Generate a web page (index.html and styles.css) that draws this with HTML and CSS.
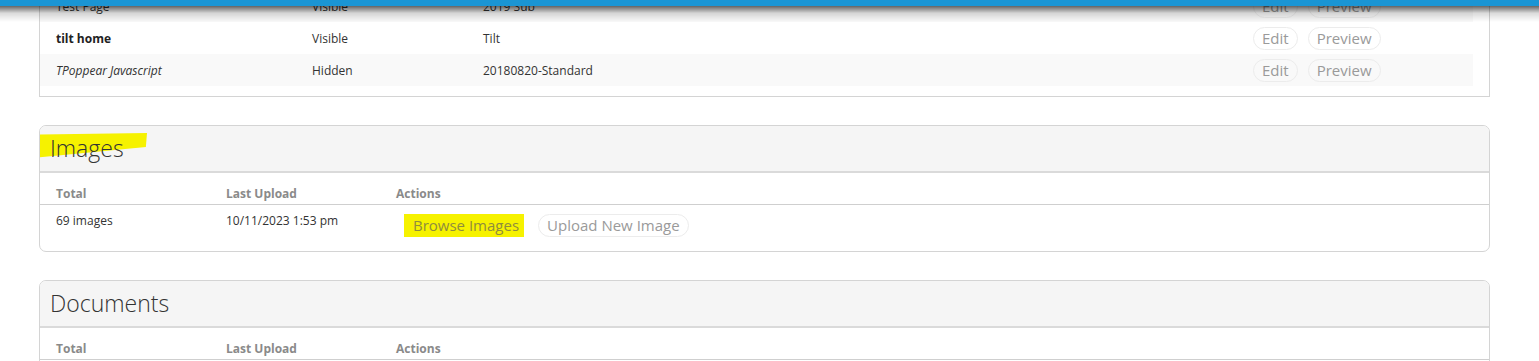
FILE: index.html
```html
<!DOCTYPE html>
<html lang="en">
<head>
    <meta charset="UTF-8">
    <meta name="viewport" content="width=device-width, initial-scale=1.0">
    <title>Site Content</title>
    <link rel="stylesheet" href="styles.css">
</head>
<body>
    <div class="topbar"></div>

    <main class="page">
        <section class="panel panel-pages">
            <table class="data-table pages-table">
                <colgroup>
                    <col class="col-name">
                    <col class="col-status">
                    <col class="col-template">
                    <col>
                </colgroup>
                <tr class="striped">
                    <td>Test Page</td>
                    <td>Visible</td>
                    <td>2019 Sub</td>
                    <td class="row-actions"><a class="btn">Edit</a><a class="btn">Preview</a></td>
                </tr>
                <tr>
                    <td class="page-name">tilt home</td>
                    <td>Visible</td>
                    <td>Tilt</td>
                    <td class="row-actions"><a class="btn">Edit</a><a class="btn">Preview</a></td>
                </tr>
                <tr class="striped">
                    <td class="page-hidden">TPoppear Javascript</td>
                    <td>Hidden</td>
                    <td>20180820-Standard</td>
                    <td class="row-actions"><a class="btn">Edit</a><a class="btn">Preview</a></td>
                </tr>
            </table>
        </section>

        <section class="panel">
            <div class="panel-header">
                <h2 class="panel-title"><span class="marker"></span>Images</h2>
            </div>
            <table class="data-table summary-table">
                <colgroup>
                    <col class="col-total">
                    <col class="col-upload">
                    <col>
                </colgroup>
                <tr>
                    <th>Total</th>
                    <th>Last Upload</th>
                    <th>Actions</th>
                </tr>
                <tr class="summary-row">
                    <td>69 images</td>
                    <td>10/11/2023 1:53 pm</td>
                    <td class="summary-actions"><a class="btn btn-marked">Browse Images</a><a class="btn">Upload New Image</a></td>
                </tr>
            </table>
        </section>

        <section class="panel">
            <div class="panel-header">
                <h2 class="panel-title">Documents</h2>
            </div>
            <table class="data-table summary-table">
                <colgroup>
                    <col class="col-total">
                    <col class="col-upload">
                    <col>
                </colgroup>
                <tr>
                    <th>Total</th>
                    <th>Last Upload</th>
                    <th>Actions</th>
                </tr>
                <tr class="summary-row">
                    <td>12 documents</td>
                    <td>10/11/2023 1:53 pm</td>
                    <td class="summary-actions"><a class="btn">Browse Documents</a><a class="btn">Upload New Document</a></td>
                </tr>
            </table>
        </section>
    </main>
</body>
</html>
```

FILE: styles.css
```css
:root {
    --color-brand: #1a95d4;
    --color-border: #d4d4d4;
    --color-line: #cfcfcf;
    --color-header-bg: #f5f5f5;
    --color-stripe: #f9f9f9;
    --color-text: #333333;
    --color-muted: #8a8a8a;
    --color-btn: #9a9a9a;
    --color-marker: #f6f200;
}

* {
    margin: 0;
    padding: 0;
    box-sizing: border-box;
}

body {
    font-family: 'Open Sans', 'Liberation Sans', sans-serif;
    font-size: 12px;
    color: var(--color-text);
    background: #ffffff;
    overflow: hidden;
}

.topbar {
    position: fixed;
    top: 0;
    left: 0;
    right: 0;
    height: 6px;
    background: var(--color-brand);
    z-index: 10;
}

.topbar::after {
    content: "";
    position: absolute;
    top: 6px;
    left: 0;
    right: 0;
    height: 16px;
    background: linear-gradient(rgba(0, 0, 0, 0.6), rgba(0, 0, 0, 0.14) 45%, rgba(0, 0, 0, 0));
}

.page {
    margin: -10px 49px 0 39px;
    display: flex;
    flex-direction: column;
    gap: 28px;
}

.panel {
    border: 1px solid var(--color-border);
    border-radius: 7px;
    overflow: hidden;
}

.panel-pages {
    border-top: none;
    border-radius: 0;
    padding-bottom: 10px;
}

.panel-header {
    height: 47px;
    background: var(--color-header-bg);
    border-bottom: 2px solid #dadada;
    display: flex;
    align-items: center;
    padding-left: 10px;
}

.panel-title {
    position: relative;
    isolation: isolate;
    font-size: 23px;
    font-weight: 300;
    color: #333333;
    line-height: 1;
}

.marker {
    position: absolute;
    left: -17px;
    top: -4px;
    width: 114px;
    height: 25px;
    background: var(--color-marker);
    clip-path: polygon(2% 6%, 100% 0%, 99% 56%, 0% 100%);
    z-index: -1;
}

.data-table {
    border-collapse: collapse;
    table-layout: fixed;
    width: 100%;
}

.data-table td,
.data-table th {
    padding: 0 16px;
    text-align: left;
    white-space: nowrap;
}

.pages-table {
    width: calc(100% - 16px);
}

.pages-table tr {
    height: 32px;
}

.pages-table tr.striped {
    background: var(--color-stripe);
}

.col-name { width: 256px; }
.col-status { width: 171px; }
.col-template { width: 770px; }

.page-name {
    font-weight: 700;
    color: #222222;
}

.page-hidden {
    font-style: italic;
}

.row-actions {
    display: flex;
    gap: 10px;
    align-items: center;
    height: 32px;
}

.btn {
    display: inline-flex;
    align-items: center;
    height: 23px;
    padding: 0 8px;
    border: 1px solid #ececec;
    border-radius: 12px;
    font-size: 15px;
    color: var(--color-btn);
    cursor: pointer;
}

.col-total { width: 170px; }
.col-upload { width: 170px; }

.summary-table th {
    height: 31px;
    vertical-align: bottom;
    padding-bottom: 2px;
    font-weight: 700;
    color: var(--color-muted);
    border-bottom: 1px solid var(--color-line);
}

.summary-row td {
    height: 47px;
    vertical-align: top;
    padding-top: 7px;
}

.summary-row td.summary-actions {
    padding: 9px 0 0 24px;
}

.summary-actions .btn + .btn {
    margin-left: 14px;
}

.btn-marked {
    background: var(--color-marker);
    border-color: var(--color-marker);
    border-radius: 0;
    padding-right: 4px;
    color: #8f8c3e;
}
```
